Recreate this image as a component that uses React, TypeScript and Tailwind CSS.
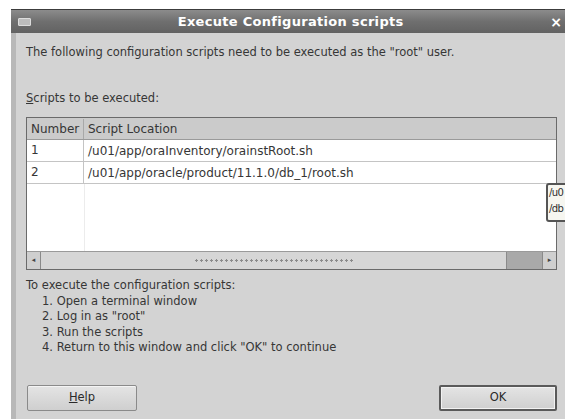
import React from "react";

const rows = [
  { n: "1", path: "/u01/app/oraInventory/orainstRoot.sh" },
  { n: "2", path: "/u01/app/oracle/product/11.1.0/db_1/root.sh" },
];

const steps = [
  "Open a terminal window",
  'Log in as "root"',
  "Run the scripts",
  'Return to this window and click "OK" to continue',
];

function GtkButton({ label, isDefault }: { label: string; isDefault?: boolean }) {
  return (
    <button
      className={
        "h-[26px] rounded-[2px] bg-gradient-to-b from-[#e4e4e4] to-[#cfcfcf] text-[11.5px] text-[#2a2a2a] " +
        (isDefault
          ? "w-[118px] border-2 border-[#5a5a5a] shadow-[inset_0_0_0_1px_#f2f2f2]"
          : "w-[110px] border border-[#8a8a8a] shadow-[inset_0_1px_0_#f4f4f4]")
      }
    >
      {label === "Help" ? (
        <>
          <span className="underline">H</span>elp
        </>
      ) : (
        label
      )}
    </button>
  );
}

export default function App() {
  return (
    <div
      className="w-[565px] h-[419px] overflow-hidden bg-white pt-[9px] pl-[11px]"
      style={{ fontFamily: '"DejaVu Sans", "Liberation Sans", sans-serif' }}
    >
      <div className="relative flex h-[410px] w-[560px] flex-col">
        {/* title bar */}
        <div className="flex h-[24px] items-center bg-gradient-to-b from-[#8c8c8c] via-[#6f6f6f] to-[#626262] border-t border-[#3c3c3c] px-[7px]">
          <div className="h-[8px] w-[13px] rounded-[1px] border border-[#dcdcdc] bg-[#bdbdbd]" />
          <div className="flex-1 text-center text-[13px] font-bold text-white tracking-[0.3px]">
            Execute Configuration scripts
          </div>
          <div className="mr-[2px] text-[14px] font-bold leading-none text-white">×</div>
        </div>

        {/* dialog body */}
        <div className="flex flex-1 flex-col border-l-[5px] border-[#b8b8b8] bg-[#d3d3d3] pl-[10px] pr-[14px] text-[11.5px] text-[#363636]">
          <div className="mt-[12px] leading-[14px]">
            The following configuration scripts need to be executed as the "root" user.
          </div>

          <div className="mt-[32px] leading-[14px]">
            <span className="underline">S</span>cripts to be executed:
          </div>

          {/* script table */}
          <div className="mt-[12px] flex h-[153px] flex-col border border-[#6a6a6a] bg-white text-[12px]">
            <div className="flex h-[22px] items-center border-b border-[#9a9a9a] bg-[#cbcbcb]">
              <div className="w-[57px] border-r border-[#a8a8a8] pl-[4px] leading-[20px]">Number</div>
              <div className="pl-[4px]">Script Location</div>
            </div>
            <div className="relative flex-1">
              {rows.map((r) => (
                <div key={r.n} className="flex h-[22px] items-center border-b border-[#c4c4c4]">
                  <div className="h-full w-[57px] border-r border-[#c4c4c4] pl-[4px] leading-[21px]">{r.n}</div>
                  <div className="pl-[4px]">{r.path}</div>
                </div>
              ))}
              <div className="absolute bottom-0 left-[57px] top-[44px] border-l border-[#ececec]" />
            </div>
            {/* horizontal scrollbar */}
            <div className="flex h-[18px] items-stretch border-t border-[#9a9a9a] bg-[#a9a9a9]">
              <div className="flex w-[14px] items-center justify-center border-r border-[#8a8a8a] bg-[#cfcfcf] text-[7px] text-[#444]">
                ◂
              </div>
              <div className="flex w-[466px] items-center justify-center border-r border-[#8a8a8a] bg-[#d6d6d6]">
                <div className="h-[5px] w-[160px] bg-[radial-gradient(circle,#8a8a8a_1px,transparent_1.2px)] bg-[length:5px_5px]" />
              </div>
              <div className="flex-1" />
              <div className="flex w-[14px] items-center justify-center border-l border-[#8a8a8a] bg-[#cfcfcf] text-[7px] text-[#444]">
                ▸
              </div>
            </div>
          </div>

          {/* instructions */}
          <div className="mt-[8px] leading-[15.5px]">
            <div>To execute the configuration scripts:</div>
            {steps.map((s, i) => (
              <div key={i} className="pl-[16px]">
                {i + 1}. {s}
              </div>
            ))}
          </div>

          <div className="mt-auto mb-[8px] flex items-end justify-between pl-[1px]">
            <GtkButton label="Help" />
            <GtkButton label="OK" isDefault />
          </div>
        </div>

        {/* path tooltip, running off the screen edge */}
        <div className="absolute left-[535px] top-[174px] h-[39px] w-[40px] rounded-[3px] border-2 border-[#555] bg-[#f6f6f0] pl-[1px] text-[10px] leading-[16px] tracking-[-0.6px] text-[#2e2e2e]">
          <div>/u0</div>
          <div>/db</div>
        </div>
      </div>
    </div>
  );
}
